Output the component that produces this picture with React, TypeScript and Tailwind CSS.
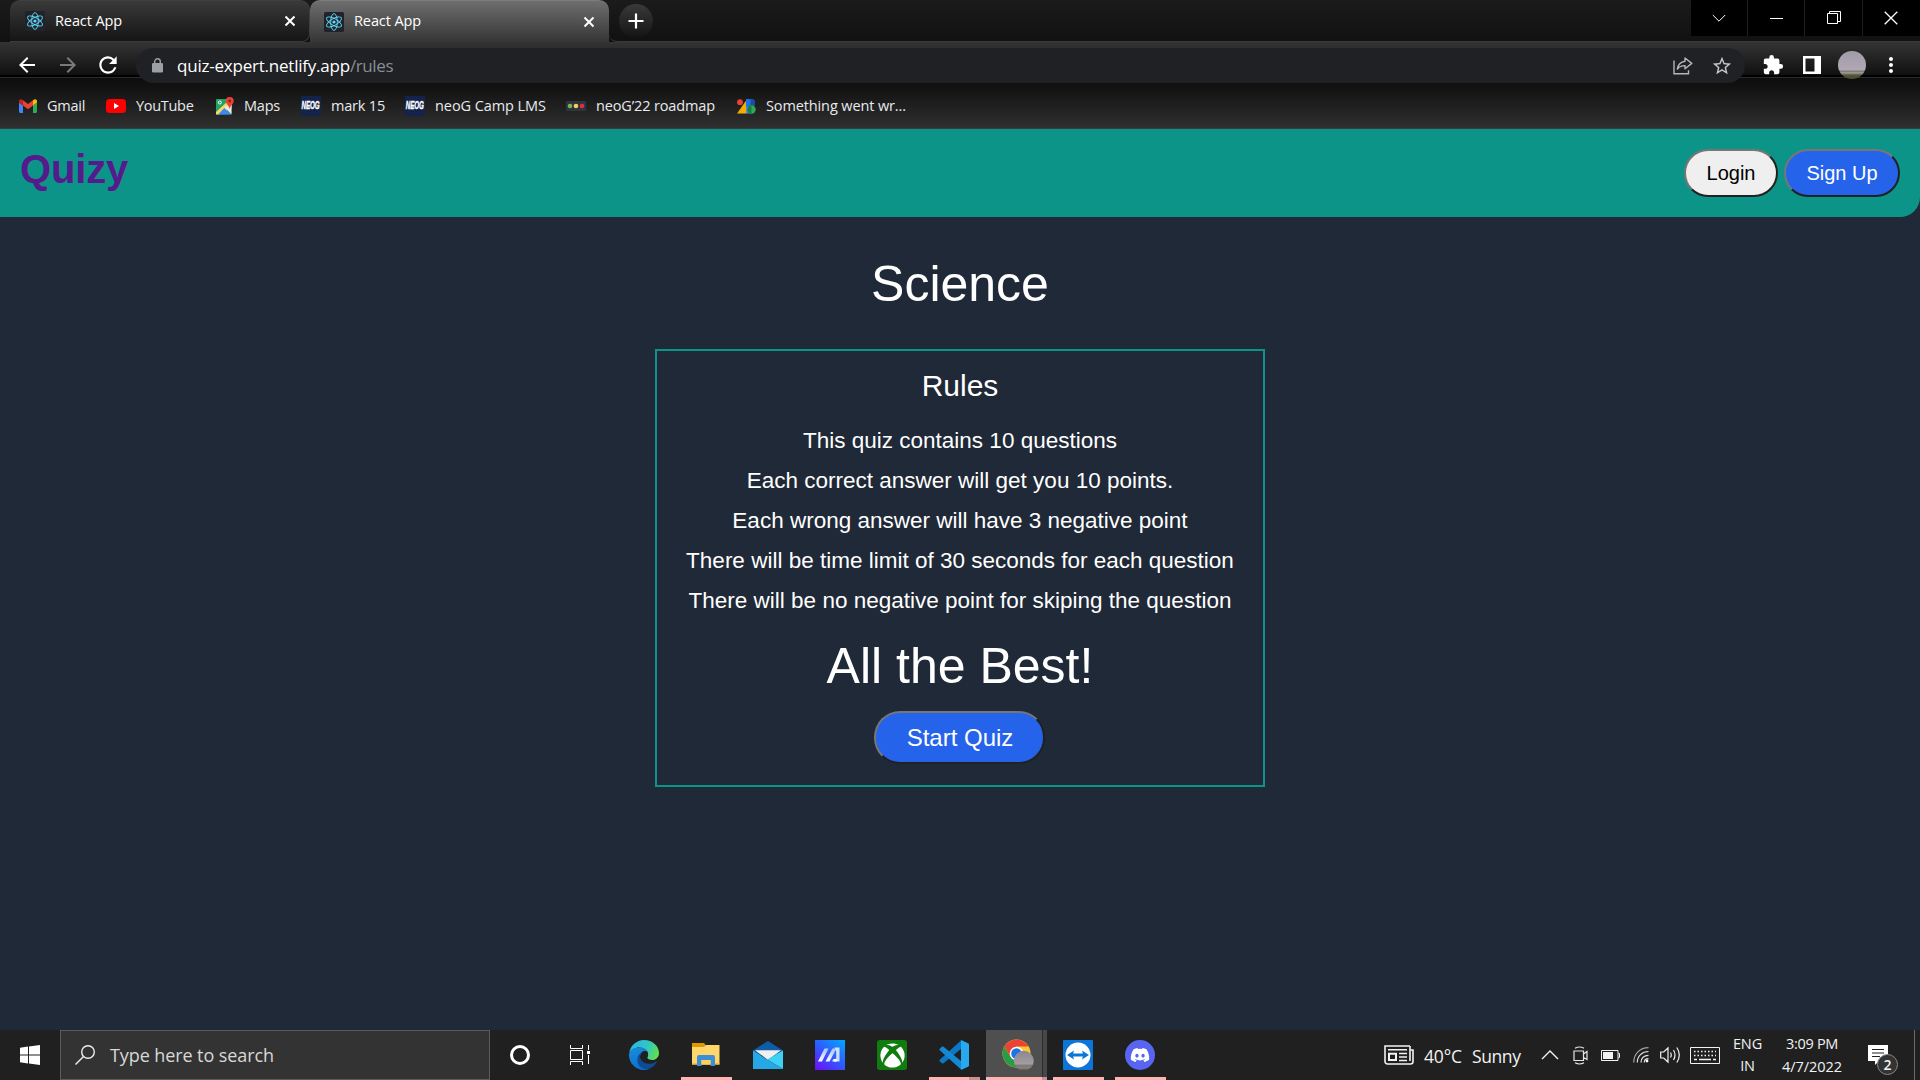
import type { ReactNode } from "react";
import { MdArrowBack, MdArrowForward, MdRefresh, MdStarBorder, MdExtension, MdMoreVert } from "react-icons/md";
import { FaXbox, FaDiscord } from "react-icons/fa";

function ReactFavicon() {
  return (
    <svg viewBox="0 0 20 20" className="h-5 w-5 shrink-0">
      <rect width="20" height="20" rx="1.5" fill="#20232a" />
      <g fill="none" stroke="#61dafb" strokeWidth="0.9">
        <ellipse cx="10" cy="10" rx="3.300" ry="8.400" />
        <ellipse cx="10" cy="10" rx="3.300" ry="8.400" transform="rotate(60 10 10)" />
        <ellipse cx="10" cy="10" rx="3.300" ry="8.400" transform="rotate(120 10 10)" />
      </g>
      <circle cx="10" cy="10" r="1.6" fill="#61dafb" />
    </svg>
  );
}

function CloseGlyph() {
  return (
    <svg viewBox="0 0 12 12" className="ml-px h-3 w-3 shrink-0">
      <path d="M1.5 1.5l9 9M10.5 1.5l-9 9" stroke="#fff" strokeWidth="2" />
    </svg>
  );
}

function TabStrip() {
  return (
    <div className="flex h-[42px] bg-gradient-to-b from-[#1b1b1b] to-[#111111] pl-[10px]">
      <div className="flex h-[42px] w-[300px] items-center rounded-t-[10px] rounded-br-[8px] border-t border-r border-b border-t-[#3f3f3f] border-r-[#3f3f3f] border-b-[#3a3a3a] bg-gradient-to-b from-[#3a3a3a] to-[#151515] pl-[15px]">
        <ReactFavicon />
        <span className="ml-[10px] w-[228px] pb-px text-[14.5px] tracking-[-0.1px] text-white">React App</span>
        <CloseGlyph />
      </div>
      <div className="flex h-[42px] w-[299px] items-center rounded-t-[10px] border-t border-[#7c7c7c] bg-gradient-to-b from-[#6f6f6f] to-[#363636] pl-[14px]">
        <ReactFavicon />
        <span className="ml-[10px] w-[228px] pb-[2px] text-[14.5px] tracking-[-0.1px] text-white">React App</span>
        <CloseGlyph />
      </div>
      <div className="flex flex-1 rounded-bl-[8px] border-b border-[#3a3a3a]">
        <div className="mt-1 ml-[10px] flex h-[34px] w-[34px] items-center justify-center rounded-full bg-gradient-to-b from-[#3a3a3a] to-[#141414]">
          <svg viewBox="0 0 16 16" className="h-4 w-4">
            <path d="M8 0.5v15M0.5 8h15" stroke="#fff" strokeWidth="2.2" />
          </svg>
        </div>
        <div className="ml-auto flex h-9 w-[229px] bg-black">
          <div className="flex w-[57px] items-center justify-center border-r border-[#1e1e1e]">
            <svg viewBox="0 0 14 14" className="h-[14px] w-[14px]" fill="none" stroke="#fff">
              <path d="M0.8 4l6.2 6.2L13.2 4" />
            </svg>
          </div>
          <div className="flex w-[57px] items-center justify-center border-r border-[#1e1e1e]">
            <div className="h-px w-[13px] bg-white" />
          </div>
          <div className="flex w-[58px] items-center justify-center border-r border-[#1e1e1e]">
            <svg viewBox="0 0 14 14" className="h-[14px] w-[14px]" fill="none" stroke="#fff">
              <path d="M0.500 2.500h10v10h-10zM2.500 2.500v-2h11v10h-3" />
            </svg>
          </div>
          <div className="flex w-[56px] items-center justify-center">
            <svg viewBox="0 0 14 14" className="h-[14px] w-[14px]" fill="none" stroke="#fff" strokeWidth="1.3">
              <path d="M0.7 0.7l12.6 12.6M13.3 0.7L0.7 13.3" />
            </svg>
          </div>
        </div>
      </div>
    </div>
  );
}

function Toolbar() {
  return (
    <div className="flex h-[42px] bg-[linear-gradient(to_bottom,#343434_0px,#101010_33px,#000_33px,#000_35px,#2b2b2b_35px,#2b2b2b_36px,#0d0d0d_36px,#101010_42px)]">
      <div className="flex h-[46px] w-[136px] items-center pl-[15px] text-[24px] text-white">
        <MdArrowBack />
        <MdArrowForward className="ml-[17px] text-[#7a7a7a]" />
        <MdRefresh className="ml-[15px] text-[26px]" />
      </div>
      <div className="mt-[6px] flex h-[35px] w-[1609px] items-center rounded-full bg-[#202124] pl-[16px]">
        <svg viewBox="0 0 11 15" className="h-[15px] w-[11px]">
          <rect y="5" width="11" height="9.500" rx="1.300" fill="#9aa0a6" />
          <path d="M2.700 6V3.600a2.800 2.800 0 0 1 5.600 0V6" fill="none" stroke="#9aa0a6" strokeWidth="1.400" />
        </svg>
        <span className="ml-[14px] flex text-[17px] text-[#8a8d91]">
          <span className="tracking-[-0.22px] text-white">quiz-expert.netlify.app</span>
          <span className="tracking-[-0.4px]">/rules</span>
        </span>
        <svg viewBox="0 0 20 18" className="ml-auto h-[18px] w-5" fill="none" stroke="#b4b6b9" strokeWidth="1.4">
          <path d="M1 3.5v13.3h14.5v-3.5" />
          <path d="M12 1l6.800 5.400L12 11.800V8.600C8.500 8.600 6 9.700 4.400 12.200 4.900 8 7.500 4.800 12 4.200z" strokeLinejoin="round" />
        </svg>
        <MdStarBorder className="mr-[12px] ml-[18px] text-[22px] text-[#c4c6c9]" />
      </div>
      <div className="flex h-[46px] flex-1 items-center text-white">
        <MdExtension className="ml-[17px] text-[22px]" />
        <svg viewBox="0 0 18 18" className="ml-[19px] h-[18px] w-[18px]">
          <path fill="#fff" fillRule="evenodd" d="M0 0h18v18H0zM2.500 2.500v13h9v-13z" />
        </svg>
        <div className="ml-[17px] h-7 w-7 rounded-full bg-[linear-gradient(to_bottom,#a29ba8_0%,#b0a8b3_68%,#77746f_72%,#a39d9f_78%,#55553a_86%,#4a4c2c_100%)]" />
        <MdMoreVert className="ml-[13px] text-[24px]" />
      </div>
    </div>
  );
}

function GmailIcon() {
  return (
    <svg viewBox="0 0 18 14" className="h-[14px] w-[18px]">
      <path fill="#4285f4" d="M0 3.500l4 3V14H1.200C.5 14 0 13.500 0 12.800z" />
      <path fill="#34a853" d="M18 3.500l-4 3V14h2.800c.7 0 1.200-.5 1.200-1.200z" />
      <path fill="#ea4335" d="M4 1.300l5 3.800 5-3.800V6.500l-5 3.800-5-3.800z" />
      <path fill="#c5221f" d="M0 2C0 .3 2 -.5 3.300.7L4 1.300V6.500l-4-3z" />
      <path fill="#fbbc04" d="M18 2c0-1.700-2-2.500-3.300-1.300L14 1.300V6.500l4-3z" />
    </svg>
  );
}

function YouTubeIcon() {
  return (
    <svg viewBox="0 0 20 14" className="h-[14px] w-5">
      <rect width="20" height="14" rx="3.5" fill="#f00" />
      <path fill="#fff" d="M8 4l5 3-5 3z" />
    </svg>
  );
}

function MapsIcon() {
  return (
    <svg viewBox="0 0 18 18" className="h-[18px] w-[18px]">
      <rect y="2" width="15.500" height="15.500" rx="1" fill="#1fa463" />
      <path fill="#fdd663" d="M0 15L12 4l3.500 3v4L3 17.500H0z" />
      <path fill="#e8eaed" d="M8.500 10l7 -3v10.500z" />
      <path fill="#4285f4" d="M2 17.500L8.300 11l6.500 6.500z" />
      <circle cx="3.800" cy="5.500" r="1.500" fill="none" stroke="#fff" strokeWidth="1" />
      <path fill="#ea4335" d="M13.700 0a4 4 0 0 1 4 4c0 3-3.200 4-4 8-.8-4-4-5-4-8a4 4 0 0 1 4-4z" />
      <circle cx="13.700" cy="4" r="1.400" fill="#8c1d14" />
    </svg>
  );
}

function NeogIcon() {
  return (
    <div className="flex h-5 w-5 items-center justify-center bg-[#13234b]">
      <span className="scale-x-[0.54] font-['Liberation_Sans'] text-[11.5px] leading-none font-bold text-white italic [-webkit-text-stroke:0.4px_white]">NEOG</span>
    </div>
  );
}

function RoadmapIcon() {
  return (
    <svg viewBox="0 0 20 10" className="h-[10px] w-5">
      <rect width="20" height="10" rx="1" fill="#2e343b" />
      <circle cx="4" cy="5" r="2.300" fill="#78b159" />
      <circle cx="10" cy="5" r="2.300" fill="#fdcb58" />
      <circle cx="16" cy="5" r="2.300" fill="#dd2e44" />
    </svg>
  );
}

function BlocksIcon() {
  return (
    <svg viewBox="0 0 19 15" className="h-[15px] w-[19px]">
      <path fill="#f9ab00" d="M9.500 1v13.500H0z" />
      <circle cx="3" cy="3.200" r="2.900" fill="#ea4335" />
      <path fill="#4285f4" d="M9 .3h4.500v14.200H9z" />
      <path fill="#1a73e8" d="M9 .3h5.500a3.600 3.600 0 0 1 0 7.200H9z" />
      <path fill="#174ea6" d="M13.500 .3h1a3.600 3.600 0 0 1 0 7.200h-1z" />
      <circle cx="14.500" cy="10.500" r="4.200" fill="#34a853" />
      <path fill="#188038" d="M10.300 10.500a4.200 4.200 0 0 1 4.200-4.200v8.400a4.200 4.200 0 0 1-4.200-4.200z" />
    </svg>
  );
}

function Bookmark({ icon, children, className }: { icon: ReactNode; children: ReactNode; className: string }) {
  return (
    <div className={"flex shrink-0 items-center whitespace-nowrap " + className}>
      {icon}
      {children}
    </div>
  );
}

function BookmarksBar() {
  return (
    <div className="flex h-[45px] items-center border-b border-[#3c3c3c] bg-gradient-to-b from-[#101010] to-[#303030] pl-[19px] text-[14.5px] text-[#e8eaed]">
      <Bookmark icon={<GmailIcon />} className="w-[87px] tracking-[-0.25px]">
        <span className="ml-[10px]">Gmail</span>
      </Bookmark>
      <Bookmark icon={<YouTubeIcon />} className="w-[110px] tracking-[-0.3px]">
        <span className="ml-[10px]">YouTube</span>
      </Bookmark>
      <Bookmark icon={<MapsIcon />} className="w-[85px] tracking-[-0.2px]">
        <span className="ml-[10px]">Maps</span>
      </Bookmark>
      <Bookmark icon={<NeogIcon />} className="w-[104px] tracking-[-0.2px]">
        <span className="ml-[10px]">mark 15</span>
      </Bookmark>
      <Bookmark icon={<NeogIcon />} className="w-[161px] tracking-[-0.07px]">
        <span className="ml-[10px]">neoG Camp LMS</span>
      </Bookmark>
      <Bookmark icon={<RoadmapIcon />} className="w-[171px] tracking-[-0.14px]">
        <span className="ml-[10px]">neoG’22 roadmap</span>
      </Bookmark>
      <Bookmark icon={<BlocksIcon />} className="tracking-[-0.12px]">
        <span className="ml-[10px]">Something went wr...</span>
      </Bookmark>
    </div>
  );
}

const rules = [
  "This quiz contains 10 questions",
  "Each correct answer will get you 10 points.",
  "Each wrong answer will have 3 negative point",
  "There will be time limit of 30 seconds for each question",
  "There will be no negative point for skiping the question",
];

function QuizPage() {
  return (
    <div className="flex h-[901px] flex-col items-center bg-[#1f2937] font-['Liberation_Sans',Arial,sans-serif] text-white">
      <header className="flex h-[88px] w-full justify-between rounded-br-[20px] bg-[#0d9488] px-5">
        <div className="pt-4 text-[40px] leading-[48px] font-bold tracking-[-0.15px] text-[#551a8b]">Quizy</div>
        <div className="flex gap-[6px] pt-5 text-[20px]">
          <button className="h-12 w-[94px] rounded-[24px] border-2 border-t-[#767676] border-r-[#212121] border-b-[#212121] border-l-[#767676] bg-[#efefef] text-black">
            Login
          </button>
          <button className="h-12 w-[116px] rounded-[24px] border-2 border-t-[#767676] border-r-[#212121] border-b-[#212121] border-l-[#767676] bg-[#2563eb] text-white">
            Sign Up
          </button>
        </div>
      </header>
      <h1 className="mt-[37px] text-[50px] leading-[60px]">Science</h1>
      <section className="mt-[35px] flex h-[438px] w-[610px] flex-col items-center border-2 border-[#0d9488] pt-[15px]">
        <h2 className="text-[30px] leading-10">Rules</h2>
        <ul className="mt-[15px] text-center text-[22.5px] leading-10">
          {rules.map((rule) => (
            <li key={rule}>{rule}</li>
          ))}
        </ul>
        <p className="mt-[15px] text-[50px] leading-[60px]">All the Best!</p>
        <button className="mt-[15px] mr-px h-[53px] w-[171px] rounded-[26px] border-2 border-t-[#767676] border-r-[#212121] border-b-[#212121] border-l-[#767676] bg-[#2563eb] pl-px text-[24px]">
          Start Quiz
        </button>
      </section>
    </div>
  );
}

function TaskSlot({ children, running = false }: { children: ReactNode; running?: boolean }) {
  return (
    <div className="flex h-full w-[62px] flex-col items-center">
      <div className="flex h-[47px] items-center pt-[3px]">{children}</div>
      {running && <div className="h-[3px] w-[51px] bg-[#ffb3b3]" />}
    </div>
  );
}

function EdgeIcon() {
  return (
    <svg viewBox="0 0 30 30" className="h-[30px] w-[30px]">
      <defs>
        <linearGradient id="edgeTop" x1="0" y1="0.3" x2="1" y2="0.6">
          <stop offset="0" stopColor="#2fb4e8" />
          <stop offset="0.55" stopColor="#2fc6c4" />
          <stop offset="1" stopColor="#63e04b" />
        </linearGradient>
        <linearGradient id="edgeLeft" x1="0" y1="0" x2="0.4" y2="1">
          <stop offset="0" stopColor="#1b8fdc" />
          <stop offset="1" stopColor="#0a6fd0" />
        </linearGradient>
      </defs>
      <path fill="url(#edgeTop)" d="M0.300 13C1.300 5.500 7.500 0 15 0c8.500 0 15 6 15 13 0 4.300-3 7-6.800 7-3.500 0-5-1.300-5-2.300 0-.8 1-1.500 1-3.500C19 10.500 15 7.500 10.500 7.500 5.500 7.500 1.500 10 .3 13z" />
      <path fill="url(#edgeLeft)" d="M0 15C0 10.500 4.800 7.500 10.500 7.500c4.500 0 7.500 1.800 8.300 4.600-1-.8-2.200-1.100-3.200-1.100-2 0-4.600 2.500-4.600 6.500 0 5 3.500 10 9.500 11.300C18.800 29.600 17 30 15 30 6.700 30 0 23.300 0 15z" />
      <path fill="#0f4a93" d="M12.500 12.500c-1 1.200-1.500 3-1.500 5 0 0 1.800 6.300 9.500 6.300 3.200 0 5.300-1.500 6.300-2.300.8-.5 1.200.2.900.8-2.200 4-5.700 6.400-9.700 7.200C11 29 7.500 23.500 8.500 18c.5-2.500 2-4.500 4-5.500z" />
      <path fill="#202020" d="M15.500 11.200c2 0 3.500 1.500 3.500 3.300 0 1.700-.9 2.300-.9 3.200 0 .8 1.200 2.200 4.200 2.300-5 1.500-10.500-1-10.500-4.800 0-2.300 1.700-4 3.700-4z" />
    </svg>
  );
}

function FolderIcon() {
  return (
    <svg viewBox="0 0 28 24" className="mb-[2px] h-6 w-7">
      <path fill="#dc9a00" d="M0 1h12l2 2.500V8H0z" />
      <path fill="#ffd66b" d="M0 5h12l2-2h13.500v19.500H0z" />
      <path fill="#f2bd45" d="M0 21h27.500v1.500H0z" />
      <path fill="#3b8fd6" d="M5 24V15a2 2 0 0 1 2-2h14a2 2 0 0 1 2 2v9h-4.500v-6h-9v6z" />
      <path fill="#ffcf5c" d="M9.500 18h9v4.500h-9z" />
    </svg>
  );
}

function MailIcon() {
  return (
    <svg viewBox="0 0 30 28" className="h-7 w-[30px]">
      <path fill="#0f5ca8" d="M15 0l15 9.500V14H0V9.500z" />
      <path fill="#f0f0f0" d="M2 9.300h26L15 19z" />
      <path fill="#3fd0f5" d="M30 9.500L14 18.500 30 28z" />
      <path fill="#27a8e6" d="M0 9.500L14 18.500 30 28H0z" />
    </svg>
  );
}

function MyAsusIcon() {
  return (
    <svg viewBox="0 0 30 30" className="h-[30px] w-[30px]">
      <defs>
        <linearGradient id="asus" x1="0.100" y1="1" x2="0.900" y2="0">
          <stop offset="0" stopColor="#6a13f5" />
          <stop offset="0.500" stopColor="#2f5bff" />
          <stop offset="1" stopColor="#06a2ff" />
        </linearGradient>
        <linearGradient id="asusStroke" x1="0" y1="1" x2="0.300" y2="0">
          <stop offset="0" stopColor="#ffffff" />
          <stop offset="1" stopColor="#b5c8ff" />
        </linearGradient>
      </defs>
      <rect width="30" height="30" fill="url(#asus)" />
      <path fill="url(#asusStroke)" d="M9.500 8.500h4L7 21.500H3z" />
      <path fill="url(#asusStroke)" d="M17.500 8.500h4L14.500 21.500h-4z" />
      <path fill="#d3ddff" d="M19.500 7.500H24.500V21.500h-7.500l1.300-2.500h2.900V11.500z" />
      <circle cx="20.300" cy="20.300" r="1.500" fill="#fff" />
    </svg>
  );
}

function XboxTile() {
  return (
    <div className="flex h-[30px] w-[30px] items-center justify-center rounded-[3px] bg-[#107c10]">
      <FaXbox className="text-[25px] text-white" />
    </div>
  );
}

function VsCodeIcon() {
  return (
    <svg viewBox="0 0 30 30" className="h-[30px] w-[30px]">
      <path fill="#0b77c5" d="M22 .5L1 19.600c-.7.700-.7 1.400 0 2l1.800 1.600c.5.400 1.200.4 1.700 0L22 9z" />
      <path fill="#1389d4" d="M22 29.500L1 10.400c-.7-.7-.7-1.400 0-2l1.800-1.600c.5-.4 1.200-.4 1.700 0L22 21z" />
      <path fill="#27a9f2" d="M22 0l7 3.200c.6.300 1 .8 1 1.500v20.600c0 .7-.4 1.200-1 1.500L22 30z" />
    </svg>
  );
}

function ChromeIcon() {
  return (
    <svg viewBox="0 0 32 32" className="mt-[3px] h-8 w-8">
      <defs>
        <linearGradient id="profile" x1="0" y1="0" x2="0" y2="1">
          <stop offset="0" stopColor="#8d8790" />
          <stop offset="0.650" stopColor="#a39ca3" />
          <stop offset="0.750" stopColor="#77746f" />
          <stop offset="0.850" stopColor="#8a8581" />
          <stop offset="1" stopColor="#4e4e38" />
        </linearGradient>
      </defs>
      <circle cx="14.500" cy="14.500" r="14" fill="#fcc934" />
      <path fill="#ea4335" d="M2.400 7.500A14 14 0 0 1 26.600 7.500H14.500L8.500 18z" />
      <path fill="#2a9b46" d="M2.400 7.500A14 14 0 0 0 14.500 28.500L20.500 18H8.500z" />
      <circle cx="14.500" cy="14.500" r="6.800" fill="#fff" />
      <circle cx="14.500" cy="14.500" r="5.300" fill="#1a73e8" />
      <circle cx="21.800" cy="21.800" r="10" fill="url(#profile)" />
    </svg>
  );
}

function TeamViewerIcon() {
  return (
    <svg viewBox="0 0 30 30" className="h-[30px] w-[30px]">
      <rect width="30" height="30" rx="1" fill="#0c76d8" />
      <circle cx="15" cy="15" r="12.500" fill="#fff" />
      <path fill="#0c76d8" d="M4 15l7-4.500-.9 3.100h9.800L19 10.500l7 4.500-7 4.500.9-3.100h-9.800l.9 3.100z" />
    </svg>
  );
}

function Tray() {
  return (
    <div className="ml-auto flex h-full w-[536px] items-center text-[#f2f2f2]">
      <svg viewBox="0 0 30 20" className="h-5 w-[30px]" fill="none" stroke="#f2f2f2" strokeWidth="1.600">
        <path d="M26 1H1v15.500A2.500 2.500 0 0 0 3.500 19h23a2.500 2.500 0 0 0 2.500-2.500V5h-3V1v15" />
        <path d="M4 4.700h19M15 8.500h8M15 12h8M15 15.500h8" />
        <path d="M5 8.800h7v6.200H5z" strokeWidth="2" />
      </svg>
      <span className="ml-[10px] w-[48px] pt-[3px] text-[17.5px] tracking-[-0.15px]">40°C</span>
      <span className="w-[69px] pt-[3px] text-[17.5px] tracking-[-0.4px]">Sunny</span>
      <svg viewBox="0 0 18 10" className="h-[10px] w-[18px]" fill="none" stroke="#f2f2f2" strokeWidth="1.400">
        <path d="M1 9l8-8 8 8" />
      </svg>
      <svg viewBox="0 0 15 19" className="ml-[14px] h-[19px] w-[15px]" fill="none" stroke="#e6e6e6" strokeWidth="1.200">
        <path d="M1 5h9.500v9.500H1zM10.500 8l3.500-2.500v8L10.500 11.500M2 2.300Q6.500 -.3 11 2.300M2 16.800q4.500 2.400 9 0" />
      </svg>
      <svg viewBox="0 0 19 11" className="ml-[13px] h-[11px] w-[19px]" fill="none" stroke="#f2f2f2">
        <path d="M0.500 0.500h16.500v10H.5zM17.500 3.500h1v4h-1" />
        <path fill="#f2f2f2" stroke="none" d="M2 2h10v7H2z" />
      </svg>
      <svg viewBox="0 0 16 16" className="ml-[13px] h-4 w-4" fill="none" stroke="#e0e0e0" strokeWidth="1.200">
        <path stroke="#a0a0a0" d="M0.700 15.500C0.700 7 7 .7 15.500.7" />
        <path d="M4.300 15.500C4.300 9 9 4.500 15.500 4.500M8 15.500c0-4.300 3-7.200 7.500-7.200M11.300 15.500c0-2.200 1.700-3.800 4.200-3.800" />
        <circle cx="14" cy="14" r="1.400" fill="#fff" stroke="none" />
      </svg>
      <svg viewBox="0 0 21 18" className="ml-[11px] h-[18px] w-[21px]" fill="none" stroke="#f2f2f2" strokeWidth="1.200">
        <path d="M0.700 6h3L8 2v14l-4.300-4h-3zM10.500 6.500q1.500 2.500 0 5M13.500 4q3 5 0 10M16.800 1.500q5 7.500 0 15" />
      </svg>
      <svg viewBox="0 0 30 17" className="ml-[9px] h-[17px] w-[30px]" fill="none" stroke="#f2f2f2">
        <path d="M0.500 0.500h29v16H.5z" />
        <path d="M4 4.500h22M4 8.500h22" strokeWidth="1.300" strokeDasharray="1.500 2" />
        <path d="M4 12.500h3M9 12.500h12M23 12.500h3" strokeWidth="1.300" />
      </svg>
      <div className="flex w-[55px] flex-col items-center text-[14.5px] leading-[22px] tracking-[-0.15px]">
        <span>ENG</span>
        <span>IN</span>
      </div>
      <div className="ml-px flex w-[72px] flex-col items-center text-[14.5px] leading-[23px]">
        <span className="tracking-[-0.3px]">3:09 PM</span>
        <span className="tracking-[-0.05px]">4/7/2022</span>
      </div>
      <div className="relative ml-[20px] h-5 w-5">
        <svg viewBox="0 0 20 20" className="h-5 w-5">
          <path fill="#fff" d="M0 0h20v16h-9l-4 4v-4H0z" />
          <path stroke="#202020" strokeWidth="1.200" d="M4 4.500h12M4 8h12M4 11.500h8" />
        </svg>
        <div className="absolute top-[9px] left-[9px] flex h-[21px] w-[21px] items-center justify-center rounded-full border border-[#8a8a8a] bg-[#333333] text-[14px] font-semibold">
          2
        </div>
      </div>
      <div className="ml-auto h-full w-[6px] border-l border-[#6a6a6a]" />
    </div>
  );
}

function Taskbar() {
  return (
    <div className="flex h-[50px] bg-[#202020]">
      <div className="flex w-[60px] items-center justify-center">
        <svg viewBox="0 0 20 20" className="h-5 w-5" fill="#fff">
          <path d="M0 2.700L8 1.500V9.400H0zM9 1.400L20 0v9.400H9zM0 10.400h8v8L0 17.200zM9 10.400h11V20L9 18.600z" />
        </svg>
      </div>
      <div className="flex w-[430px] items-center border border-[#5c5c5c] bg-[#333333] pl-[14px]">
        <svg viewBox="0 0 20 20" className="h-5 w-5" fill="none" stroke="#eeeeee" strokeWidth="1.400">
          <circle cx="13" cy="7" r="6.300" />
          <path d="M8.500 11.500L.5 19.500" />
        </svg>
        <span className="ml-[15px] text-[18px] tracking-[-0.09px] text-[#d8d8d8]">Type here to search</span>
      </div>
      <div className="flex w-[60px] items-center justify-center">
        <div className="h-5 w-5 rounded-full border-[3px] border-white" />
      </div>
      <div className="flex w-[63px] items-center pl-5">
        <svg viewBox="0 0 20 20" className="h-5 w-5" fill="none" stroke="#fff">
          <path d="M0.500 0v3.500h12V0M0.500 20v-3.500h12V20M0.500 5.500h12v9H.5zM18.500 0v5M18.500 10v9" />
          <path fill="#fff" stroke="none" d="M17 6h3v3h-3z" />
        </svg>
      </div>
      <TaskSlot><EdgeIcon /></TaskSlot>
      <TaskSlot running><FolderIcon /></TaskSlot>
      <TaskSlot><MailIcon /></TaskSlot>
      <TaskSlot><MyAsusIcon /></TaskSlot>
      <TaskSlot><XboxTile /></TaskSlot>
      <div className="flex h-full w-[62px] flex-col items-center">
        <div className="flex h-[47px] items-center pt-[3px]"><VsCodeIcon /></div>
        <div className="flex h-[3px] w-[51px] bg-[#ffb3b3]">
          <div className="ml-auto w-[11px] bg-[#cb8f90]" />
        </div>
      </div>
      <div className="flex h-full w-[62px] flex-col pl-px">
        <div className="flex h-[47px]">
          <div className="flex w-[56px] items-center bg-[#4f4f4f] pl-4"><ChromeIcon /></div>
          <div className="w-[5px] border-l border-[#2c2c2c] bg-[#474747]" />
        </div>
        <div className="flex h-[3px]">
          <div className="w-[56px] bg-[#ffb3b3]" />
          <div className="w-[5px] bg-[#cb8f90]" />
        </div>
      </div>
      <TaskSlot running><TeamViewerIcon /></TaskSlot>
      <TaskSlot running>
        <div className="flex h-[30px] w-[30px] items-center justify-center rounded-full bg-[#5865f2]">
          <FaDiscord className="text-[20px] text-white" />
        </div>
      </TaskSlot>
      <Tray />
    </div>
  );
}

export default function App() {
  return (
    <div className="flex h-[1080px] w-[1920px] flex-col overflow-hidden bg-[#1f2937] font-['Open_Sans','Noto_Sans',sans-serif]">
      <TabStrip />
      <Toolbar />
      <BookmarksBar />
      <QuizPage />
      <Taskbar />
    </div>
  );
}
